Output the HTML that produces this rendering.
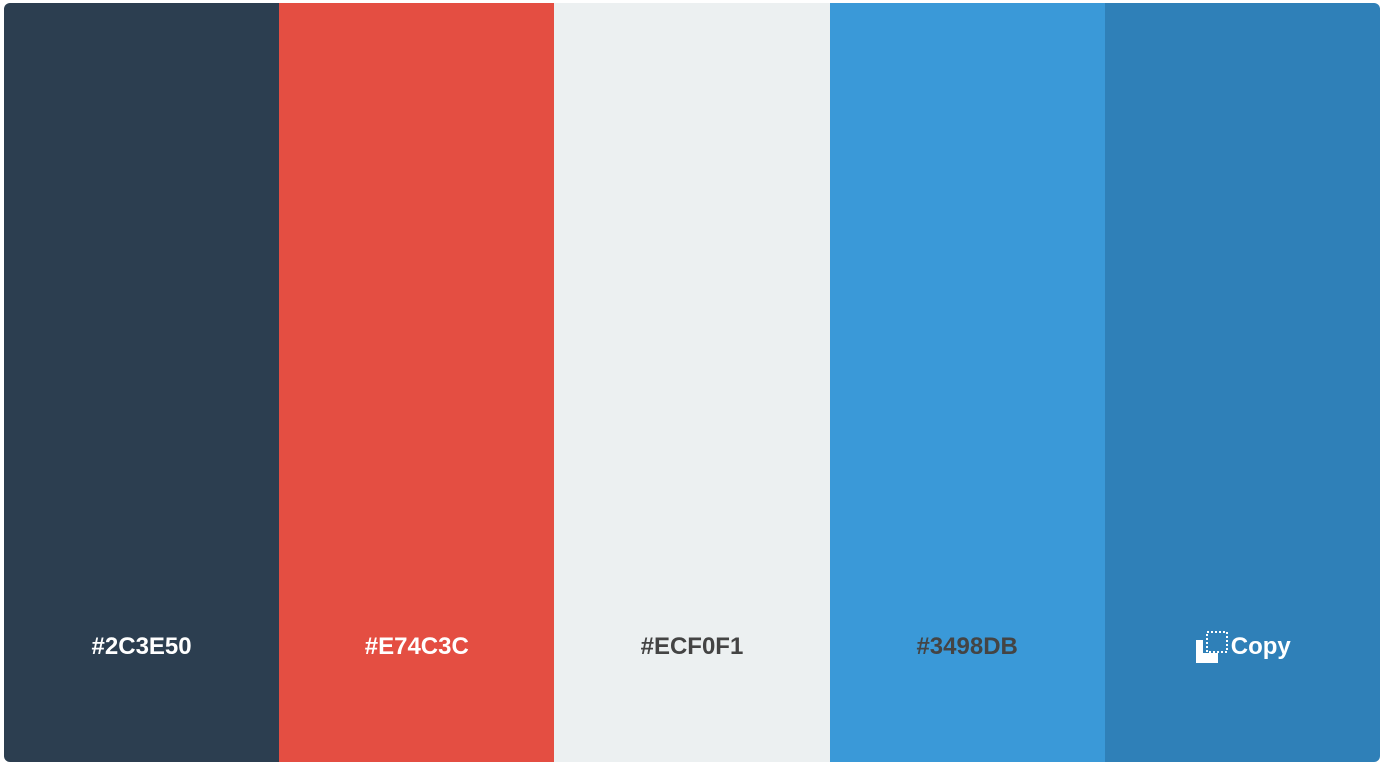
<!DOCTYPE html>
<html><head><style>
html,body{margin:0;padding:0;background:#fff;width:1388px;height:762px;overflow:hidden}
.c{position:absolute;left:4px;top:3px;width:1376px;height:759px;border-radius:6px;overflow:hidden;display:flex}
.s{width:275.2px;height:100%;position:relative}
.t{position:absolute;left:0;right:0;top:630px;text-align:center;font:bold 24px "Liberation Sans",sans-serif;letter-spacing:0px}
</style></head><body>
<div class="c">
<div class="s" style="background:#2C3E50"><div class="t" style="color:#fff">#2C3E50</div></div>
<div class="s" style="background:#E44E42"><div class="t" style="color:#fff">#E74C3C</div></div>
<div class="s" style="background:#ECF0F1"><div class="t" style="color:#444">#ECF0F1</div></div>
<div class="s" style="background:#3A99D8"><div class="t" style="color:#444">#3498DB</div></div>
<div class="s" style="background:#2F80B8">
<svg style="position:absolute;left:90px;top:627px" width="36" height="36" viewBox="0 0 36 36"><rect x="12" y="2" width="20" height="20" fill="none" stroke="#fff" stroke-width="2" stroke-dasharray="2 2"/><path d="M1 10h7v13h15v10H1z" fill="#fff"/></svg>
<div class="t" style="color:#fff;left:126px;text-align:left">Copy</div></div>
</div>
</body></html>
